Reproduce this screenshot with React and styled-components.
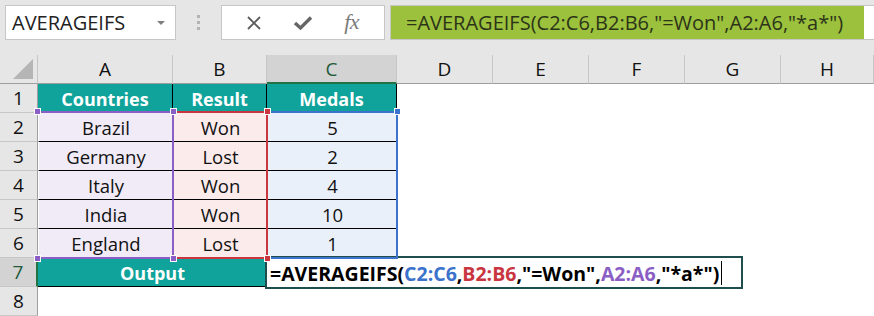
import React from "react";
import styled, { createGlobalStyle, css } from "styled-components";

const GlobalStyle = createGlobalStyle`
  html, body {
    margin: 0;
    padding: 0;
    background: #ffffff;
    overflow: hidden;
  }
  body {
    font-family: "Open Sans", "Noto Sans", sans-serif;
  }
`;

const COLORS = {
  teal: "#0fa39b",
  purple: "#8b5ec5",
  red: "#c9363f",
  blue: "#3a72cc",
  lavender: "#f0ebf7",
  pink: "#fbebeb",
  sky: "#e9f0fa",
};

const rows = [
  { n: 2, country: "Brazil", result: "Won", medals: "5" },
  { n: 3, country: "Germany", result: "Lost", medals: "2" },
  { n: 4, country: "Italy", result: "Won", medals: "4" },
  { n: 5, country: "India", result: "Won", medals: "10" },
  { n: 6, country: "England", result: "Lost", medals: "1" },
];

const columns = ["A", "B", "C", "D", "E", "F", "G", "H"];

const App = () => {
  return (
    <>
      <GlobalStyle />
      <Page>
        <Toolbar>
          <NameBox>
            <span>AVERAGEIFS</span>
            <DropArrow />
          </NameBox>
          <Grip>
            <i />
            <i />
            <i />
          </Grip>
          <IconBox>
            <IconSlot>
              <svg width="16" height="16" viewBox="0 0 16 16">
                <path d="M2 2 L14 14 M14 2 L2 14" stroke="#5c5c5c" strokeWidth="1.8" />
              </svg>
            </IconSlot>
            <IconSlot>
              <svg width="20" height="16" viewBox="0 0 20 16">
                <path d="M2 8 L7.5 13 L18 2.5" stroke="#666" strokeWidth="3.4" fill="none" />
              </svg>
            </IconSlot>
            <IconSlot>
              <Fx>fx</Fx>
            </IconSlot>
          </IconBox>
          <FormulaBox>
            <FormulaSelected>=AVERAGEIFS(C2:C6,B2:B6,"=Won",A2:A6,"*a*")</FormulaSelected>
          </FormulaBox>
        </Toolbar>

        <Stack>
          <Sheet>
            <Corner>
              <CornerTriangle />
            </Corner>
            {columns.map((c) => (
              <ColHead key={c} $active={c === "C"}>
                {c}
              </ColHead>
            ))}

            <RowHead>1</RowHead>
            <HeadCell>Countries</HeadCell>
            <HeadCell>Result</HeadCell>
            <HeadCell>Medals</HeadCell>
            <Blank $span={5} />

            {rows.map((r) => (
              <React.Fragment key={r.n}>
                <RowHead>{r.n}</RowHead>
                <DataCell $bg={COLORS.lavender}>{r.country}</DataCell>
                <DataCell $bg={COLORS.pink}>{r.result}</DataCell>
                <DataCell $bg={COLORS.sky}>{r.medals}</DataCell>
                <Blank $span={5} />
              </React.Fragment>
            ))}

            <RowHead $active>7</RowHead>
            <OutputCell>Output</OutputCell>
            <Blank $span={6} />

            <RowHead>8</RowHead>
            <Blank $span={8} />
          </Sheet>

          <Overlay>
            <RangeBox $col={4} $color={COLORS.blue}>
              <Handle $color={COLORS.blue} $pos="tr" />
            </RangeBox>
            <RangeBox $col={3} $color={COLORS.red}>
              <Handle $color={COLORS.red} $pos="tr" />
              <Handle $color={COLORS.red} $pos="br" />
            </RangeBox>
            <RangeBox $col={2} $color={COLORS.purple}>
              <Handle $color={COLORS.purple} $pos="tl" />
              <Handle $color={COLORS.purple} $pos="tr" />
              <Handle $color={COLORS.purple} $pos="bl" />
              <Handle $color={COLORS.purple} $pos="br" />
            </RangeBox>

            <EditCell>
              <span>=AVERAGEIFS(</span>
              <Ref $color={COLORS.blue}>C2:C6</Ref>
              <span>,</span>
              <Ref $color={COLORS.red}>B2:B6</Ref>
              <span>,"=Won",</span>
              <Ref $color={COLORS.purple}>A2:A6</Ref>
              <span>,"*a*")</span>
              <Caret />
            </EditCell>
          </Overlay>
        </Stack>
      </Page>
    </>
  );
};

// styled components
const Page = styled.div`
  width: 874px;
  height: 316px;
  overflow: hidden;
`;

const Toolbar = styled.div`
  height: 55px;
  box-sizing: border-box;
  background: #e6e6e6;
  display: flex;
  align-items: flex-start;
  padding: 5px 0 0 5px;
`;

const NameBox = styled.div`
  width: 171px;
  height: 35px;
  box-sizing: border-box;
  background: #ffffff;
  border: 1px solid #c6c6c6;
  display: flex;
  align-items: center;
  justify-content: space-between;
  padding: 0 10px 0 6px;
  font-size: 20px;
  color: #222;
`;

const DropArrow = styled.div`
  width: 0;
  height: 0;
  border-left: 4px solid transparent;
  border-right: 4px solid transparent;
  border-top: 4px solid #7f7f7f;
`;

const Grip = styled.div`
  width: 45px;
  height: 35px;
  display: flex;
  flex-direction: column;
  align-items: center;
  justify-content: center;
  gap: 3px;

  i {
    display: block;
    width: 3px;
    height: 3px;
    background: #b3b3b3;
  }
`;

const IconBox = styled.div`
  width: 164px;
  height: 35px;
  box-sizing: border-box;
  background: #ffffff;
  border: 1px solid #c6c6c6;
  display: flex;
  align-items: center;
  padding: 0 8px;
`;

const IconSlot = styled.div`
  flex: 1;
  display: flex;
  align-items: center;
  justify-content: center;
`;

const Fx = styled.span`
  font-family: "Liberation Serif", "DejaVu Serif", serif;
  font-style: italic;
  font-size: 22px;
  color: #7a7a7a;
  letter-spacing: -0.5px;
  line-height: 1;
  margin-top: -2px;
`;

const FormulaBox = styled.div`
  flex: 1;
  height: 35px;
  margin-left: 5px;
  box-sizing: border-box;
  background: #ffffff;
  border: 1px solid #c6c6c6;
  border-right: none;
  display: flex;
`;

const FormulaSelected = styled.div`
  width: 473px;
  background: #9bc13d;
  color: #2c3418;
  font-size: 20px;
  line-height: 33px;
  padding-left: 15px;
  box-sizing: border-box;
  white-space: nowrap;
  overflow: hidden;
`;

const Stack = styled.div`
  display: grid;

  & > * {
    grid-area: 1 / 1;
  }
`;

const gridTemplate = css`
  display: grid;
  grid-template-columns: 38px 135px 94px 130px 96px 96px 96px 96px 1fr;
  grid-template-rows: repeat(9, 29px);
`;

const Sheet = styled.div`
  ${gridTemplate}
  font-size: 18.5px;
`;

const Overlay = styled.div`
  ${gridTemplate}
  font-size: 19.5px;
  pointer-events: none;
`;

const Corner = styled.div`
  background: #e6e6e6;
  box-sizing: border-box;
  border-right: 1px solid #c6c6c6;
  border-bottom: 1px solid #9e9e9e;
  display: flex;
  align-items: flex-end;
  justify-content: flex-end;
  padding: 0 4px 4px 0;
`;

const CornerTriangle = styled.div`
  width: 0;
  height: 0;
  border-left: 20px solid transparent;
  border-bottom: 20px solid #b5b5b5;
`;

const headBase = css`
  box-sizing: border-box;
  display: flex;
  align-items: center;
  justify-content: center;
  font-size: 19px;
`;

const ColHead = styled.div`
  ${headBase}
  background: ${(p) => (p.$active ? "#d3d3d3" : "#e6e6e6")};
  border-right: 1px solid #c6c6c6;
  border-bottom: ${(p) => (p.$active ? "2px solid #217346" : "1px solid #9e9e9e")};
  color: ${(p) => (p.$active ? "#1d5b3a" : "#111")};
  padding-top: ${(p) => (p.$active ? "1px" : "0")};
`;

const RowHead = styled.div`
  ${headBase}
  background: ${(p) => (p.$active ? "#d3d3d3" : "#e6e6e6")};
  border-right: ${(p) => (p.$active ? "2px solid #217346" : "1px solid #9e9e9e")};
  border-bottom: 1px solid #c6c6c6;
  color: ${(p) => (p.$active ? "#1d5b3a" : "#111")};
`;

const HeadCell = styled.div`
  box-sizing: border-box;
  background: ${COLORS.teal};
  color: #ffffff;
  font-weight: 700;
  font-size: 18px;
  display: flex;
  align-items: center;
  justify-content: center;
  border-right: 1px solid #000;
`;

const DataCell = styled.div`
  box-sizing: border-box;
  background: ${(p) => p.$bg};
  color: #111;
  display: flex;
  align-items: center;
  justify-content: center;
  border-bottom: 1px solid #000;
  border-left: 1px solid #fff;
  padding-top: 1px;
`;

const OutputCell = styled.div`
  grid-column: span 2;
  box-sizing: border-box;
  background: ${COLORS.teal};
  color: #ffffff;
  font-weight: 700;
  font-size: 18px;
  display: flex;
  align-items: center;
  justify-content: center;
  border-bottom: 1px solid #000;
  padding-top: 2px;
`;

const Blank = styled.div`
  grid-column: span ${(p) => p.$span};
  background: #ffffff;
`;

const RangeBox = styled.div`
  grid-column: ${(p) => p.$col};
  grid-row: 3 / 8;
  position: relative;
  margin: -2px -1px -1px -1px;
  border: 2px solid ${(p) => p.$color};
  border-left-color: transparent;
`;

const Handle = styled.div`
  position: absolute;
  width: 5px;
  height: 5px;
  background: ${(p) => p.$color};
  border: 1px solid #ffffff;
  ${(p) => (p.$pos[0] === "t" ? "top: -5px;" : "bottom: -5px;")}
  ${(p) => (p.$pos[1] === "l" ? "left: -5px;" : "right: -5px;")}
`;

const EditCell = styled.div`
  grid-column: 4 / -1;
  grid-row: 8;
  justify-self: start;
  align-self: start;
  width: 478px;
  height: 33px;
  margin: -2px 0 0 -2px;
  box-sizing: border-box;
  border: 2px solid #1e4e4d;
  background: #ffffff;
  display: flex;
  align-items: center;
  padding: 1px 0 0 3px;
  font-weight: 700;
  color: #000;
  white-space: nowrap;
`;

const Ref = styled.span`
  color: ${(p) => p.$color};
`;

const Caret = styled.span`
  display: inline-block;
  width: 1px;
  height: 24px;
  background: #000;
  margin-left: 2px;
`;

export default App;
